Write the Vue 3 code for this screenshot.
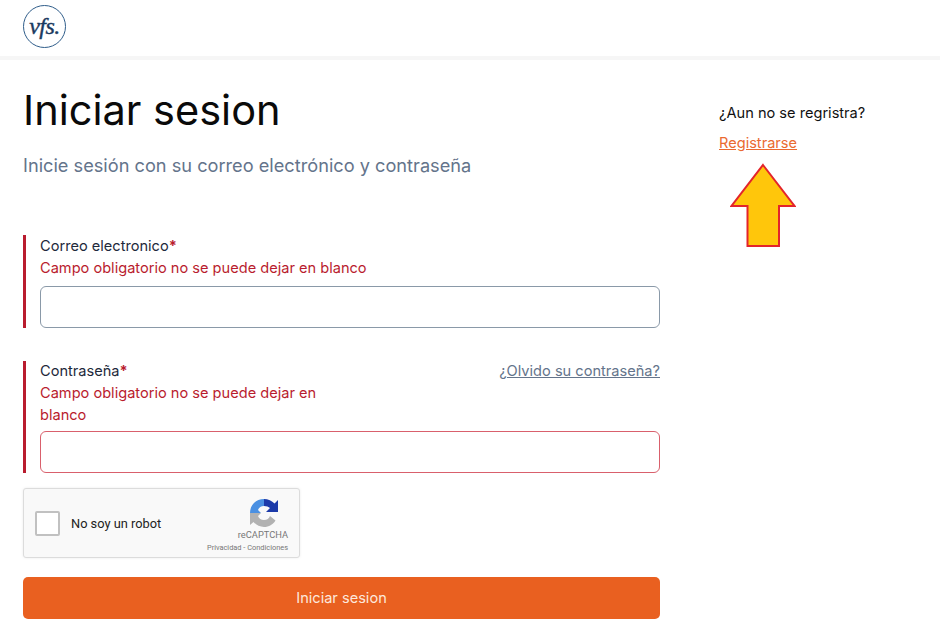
<template>
  <div class="page">
    <header class="topbar">
      <div class="logo"><span>vfs.</span></div>
    </header>

    <main class="content">
      <section class="login">
        <h1 class="title">Iniciar sesion</h1>
        <p class="subtitle">Inicie sesión con su correo electrónico y contraseña</p>

        <div class="field field-first">
          <label class="label">Correo electronico<span class="req">*</span></label>
          <div class="err">Campo obligatorio no se puede dejar en blanco</div>
          <input class="input" type="text" />
        </div>

        <div class="field field-second">
          <div class="pass-head">
            <div class="pass-left">
              <label class="label label-tight">Contraseña<span class="req">*</span></label>
              <div class="err">Campo obligatorio no se puede dejar en blanco</div>
            </div>
            <a class="forgot" href="#">¿Olvido su contraseña?</a>
          </div>
          <input class="input input-error" type="password" />
        </div>

        <div class="captcha">
          <span class="check"></span>
          <span class="robot">No soy un robot</span>
          <div class="brand">
            <svg class="rc-icon" viewBox="0 0 28 28" width="28" height="28">
              <path d="M14 0 L14 7 C11 7 9 8.500 8 11 L11 14 L0 14 L0 14 C0 6 6 0 14 0 Z" fill="#4a90e2" />
              <path d="M14 0 C18 0 22 2 24.500 4.500 L28 1 L28 13 L16 13 L20 9 C18.500 7.800 16.500 7 14 7 Z" fill="#1c3aa9" />
              <path d="M0 14 L0 26 L3.500 23 C6 26 10 28 14 28 C19 28 23 25.500 25.500 21.500 L20 17 C19 19.500 17 21 14 21 C11 21 9 19.500 8 17 L11 14 Z" fill="#b2b2b2" />
            </svg>
            <span class="rc-name">reCAPTCHA</span>
            <span class="rc-links">Privacidad - Condiciones</span>
          </div>
        </div>

        <button class="submit" type="button">Iniciar sesion</button>
      </section>

      <aside class="side">
        <p class="side-q">¿Aun no se regristra?</p>
        <a class="side-link" href="#">Registrarse</a>
        <svg class="arrow" viewBox="0 0 66 86" width="66" height="86">
          <path d="M33 2 L64.500 43 L49 43 L49 83 L17.500 83 L17.500 43 L1.500 43 Z" fill="#ffc60b" stroke="#e3242b" stroke-width="2" />
        </svg>
      </aside>
    </main>
  </div>
</template>

<script setup>
</script>

<style>
html,
body {
  margin: 0;
  background: #fff;
}
</style>

<style scoped>
.page {
  width: 940px;
  height: 630px;
  overflow: hidden;
  font-family: Inter, "Liberation Sans", sans-serif;
  color: #000;
  background: #fff;
}

.topbar {
  height: 56px;
  padding: 5px 23px 0;
  box-sizing: border-box;
}

.logo {
  width: 43px;
  height: 43px;
  box-sizing: border-box;
  border: 1.500px solid #2f5d8a;
  border-radius: 50%;
  display: flex;
  align-items: center;
  justify-content: center;
}

.logo span {
  font-family: "Liberation Serif", serif;
  font-style: italic;
  font-size: 24px;
  color: #1a3a60;
  -webkit-text-stroke: 0.4px #1a3a60;
  letter-spacing: -0.5px;
  margin-top: -1px;
}

.content {
  border-top: 4px solid #f6f6f6;
  display: flex;
  padding: 0 0 0 23px;
}

.login {
  width: 637px;
}

.title {
  margin: 23px 0 0;
  font-size: 41.500px;
  line-height: 54px;
  font-weight: 400;
  color: #0a0a0a;
}

.subtitle {
  margin: 16px 0 0;
  font-size: 18.200px;
  line-height: 24px;
  color: #64748b;
}

.field {
  border-left: 3px solid #b91c2e;
  padding-left: 14px;
}

.field-first {
  margin-top: 58px;
}

.field-second {
  margin-top: 33px;
}

.label {
  display: block;
  font-size: 14.600px;
  line-height: 22px;
  color: #1e293b;
}

.label-tight {
  line-height: 21px;
}

.req {
  color: #b91c2e;
  font-weight: 700;
}

.err {
  font-size: 14.600px;
  line-height: 22px;
  color: #b91c2e;
}

.input {
  display: block;
  width: 100%;
  height: 42px;
  margin-top: 7px;
  box-sizing: border-box;
  border: 1px solid #8a99a8;
  border-radius: 6px;
  background: #fff;
  outline: none;
}

.input-error {
  margin-top: 5px;
  border-color: #d9606c;
}

.pass-head {
  display: flex;
  justify-content: space-between;
  align-items: flex-start;
}

.pass-left {
  width: 320px;
}

.forgot {
  font-size: 14.600px;
  line-height: 20px;
  color: #64748b;
  text-decoration: underline;
}

.captcha {
  margin-top: 15px;
  width: 277px;
  height: 70px;
  box-sizing: border-box;
  border: 1px solid #dcdcdc;
  border-radius: 3px;
  background: #f9f9f9;
  box-shadow: 0 0 3px rgba(0, 0, 0, 0.08);
  display: flex;
  align-items: center;
  padding: 0 11px;
}

.check {
  width: 25px;
  height: 25px;
  box-sizing: border-box;
  border: 2px solid #c1c1c1;
  border-radius: 2px;
  background: #fff;
}

.robot {
  margin-left: 11px;
  font-family: Roboto, "Liberation Sans", sans-serif;
  font-size: 12.800px;
  color: #222;
}

.brand {
  margin-left: auto;
  margin-top: 6px;
  display: flex;
  flex-direction: column;
  align-items: flex-end;
  font-family: Roboto, "Liberation Sans", sans-serif;
  color: #777;
}

.rc-icon {
  margin: 0 10px 1px 0;
}

.rc-name {
  font-size: 9.300px;
  line-height: 14px;
}

.rc-links {
  font-size: 7.400px;
  line-height: 12px;
}

.submit {
  display: block;
  width: 100%;
  height: 42px;
  margin-top: 19px;
  border: 0;
  border-radius: 5px;
  background: #e96020;
  color: #fde8dc;
  font-family: inherit;
  font-size: 14.600px;
}

.side {
  margin-left: 59px;
  padding-top: 43px;
  display: flex;
  flex-direction: column;
  align-items: flex-start;
}

.side-q {
  margin: 0;
  font-size: 14.600px;
  line-height: 20px;
  color: #111;
}

.side-link {
  margin-top: 10px;
  font-size: 14.600px;
  line-height: 20px;
  color: #ea6a30;
  text-decoration: underline;
}

.arrow {
  margin: 10px 0 0 11px;
}
</style>
